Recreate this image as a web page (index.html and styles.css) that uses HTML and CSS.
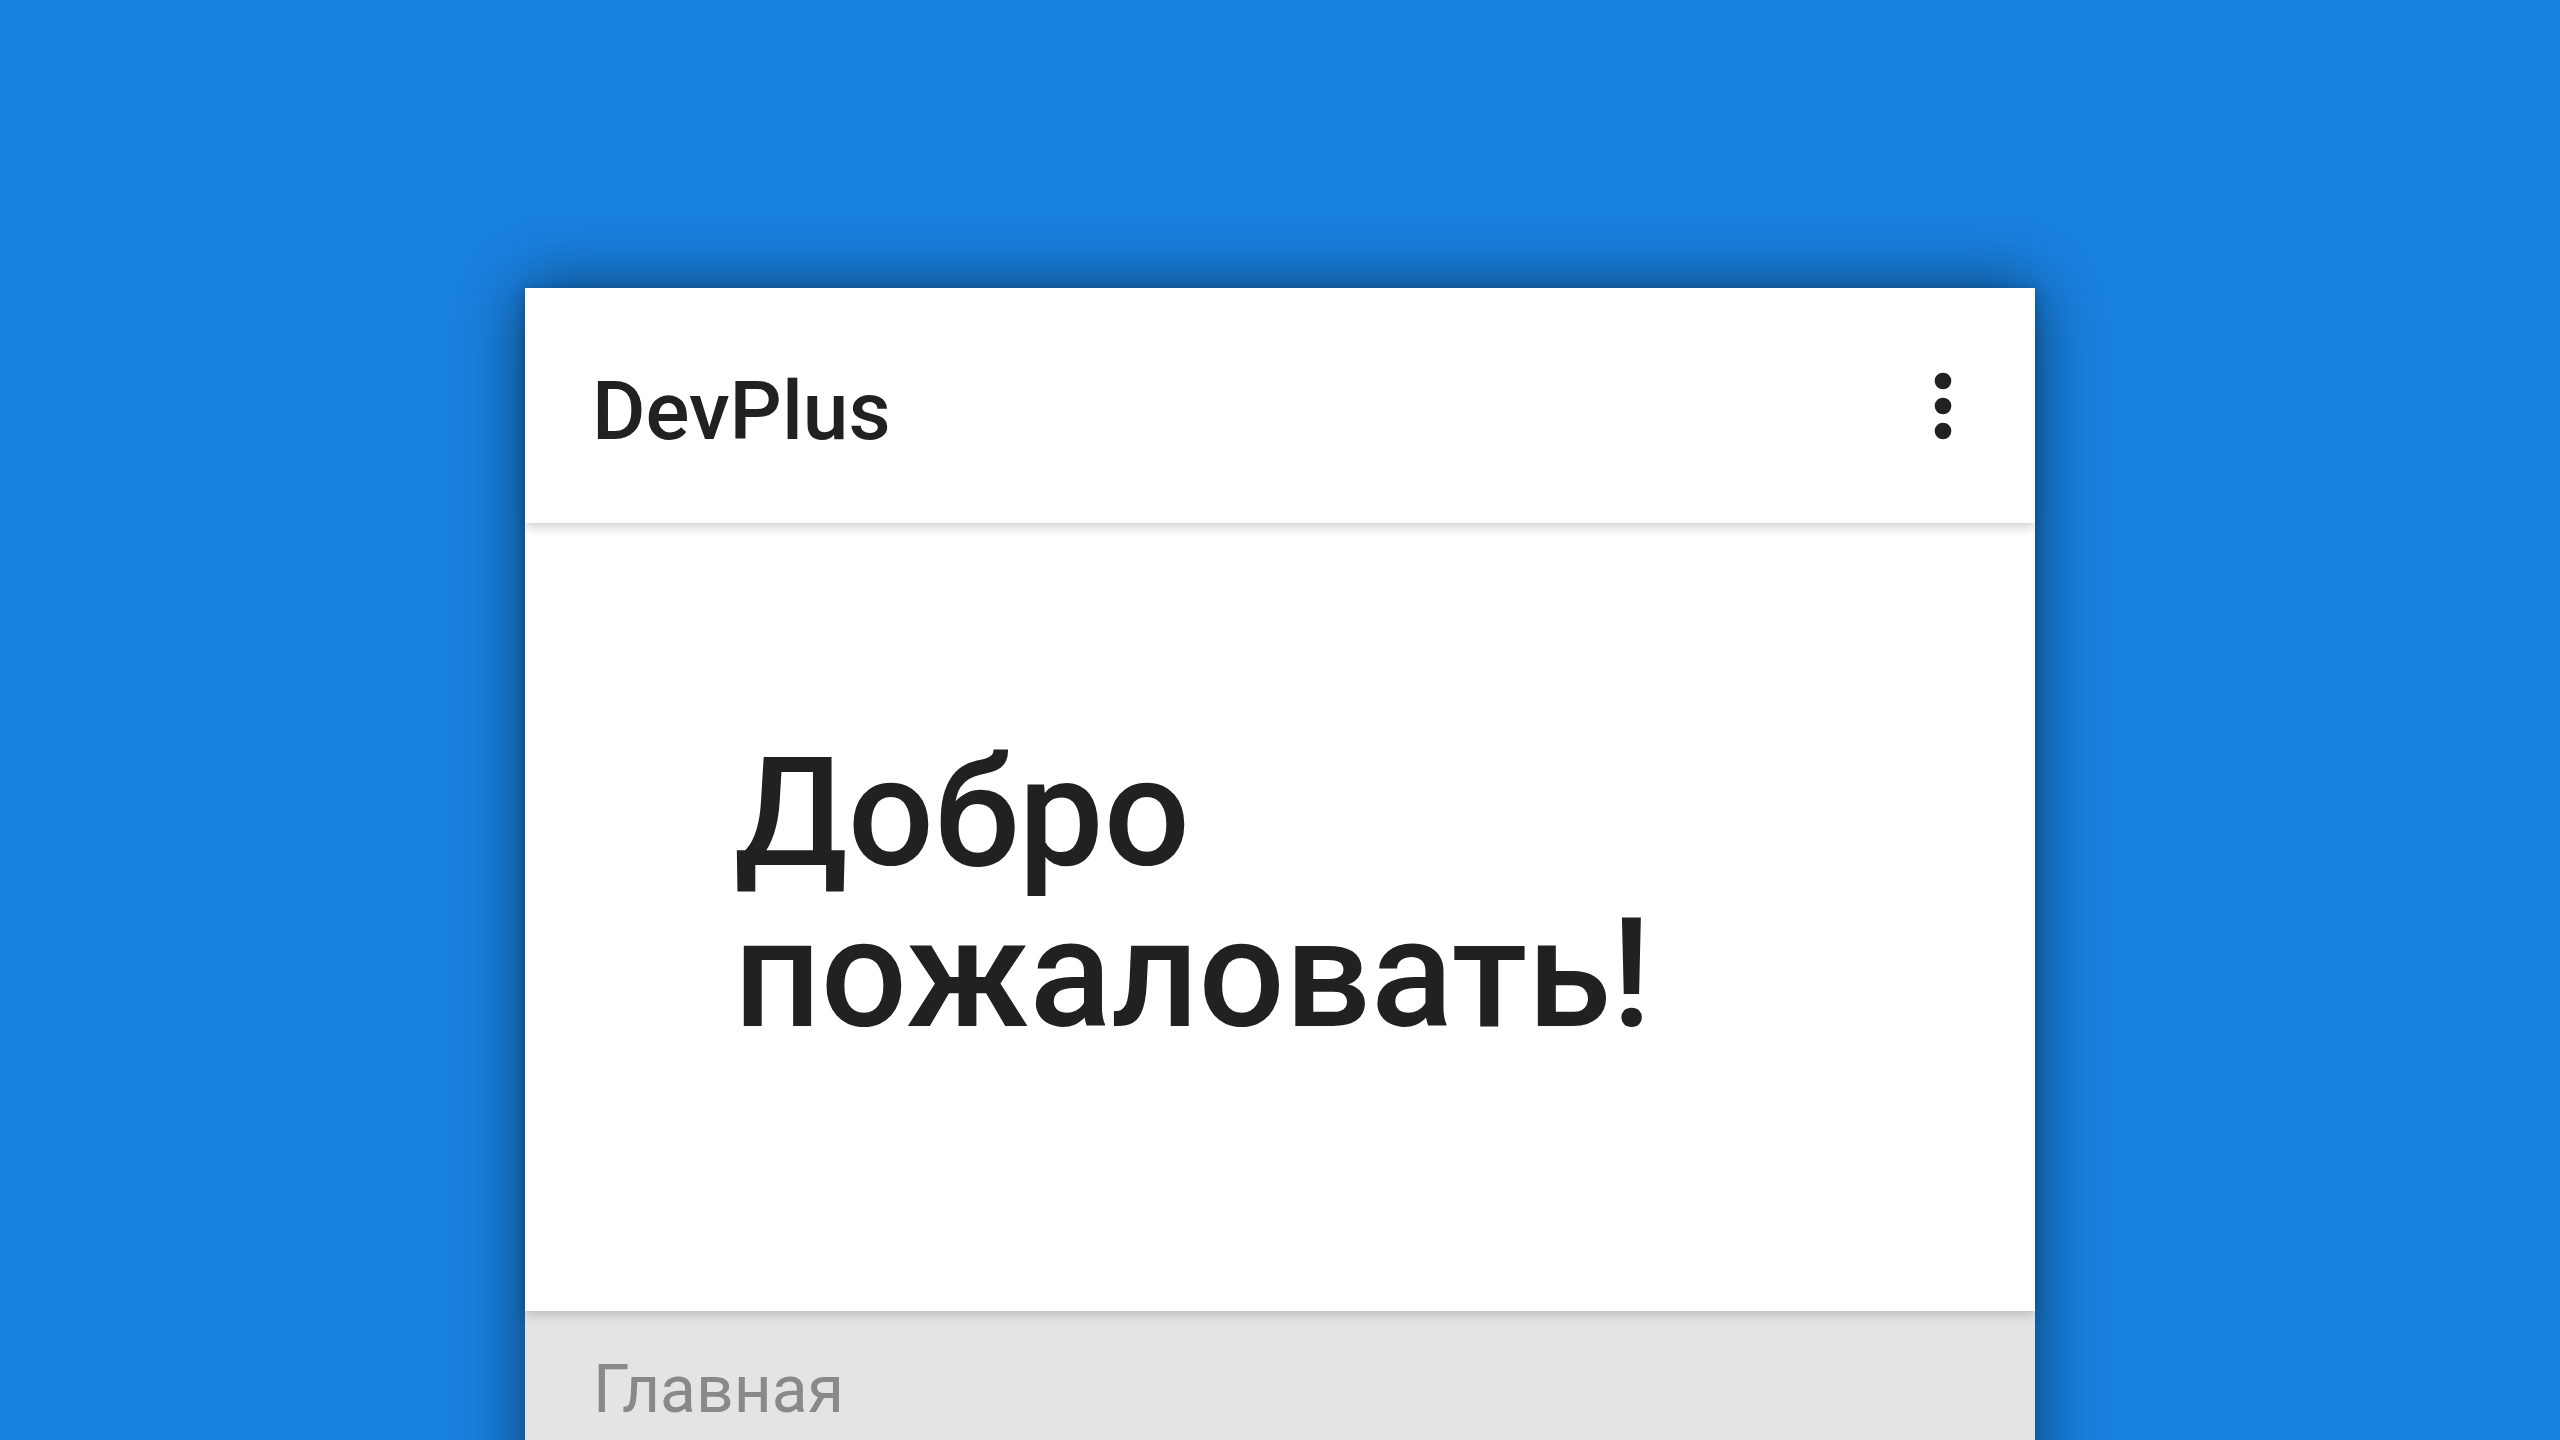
FILE: index.html
```html
<!DOCTYPE html>
<html lang="ru">
<head>
<meta charset="utf-8">
<title>DevPlus</title>
<link rel="stylesheet" href="styles.css">
</head>
<body>
<div class="card">
  <header class="appbar">
    <h1 class="title">DevPlus</h1>
    <button class="menu" aria-label="Меню">
      <svg viewBox="0 0 24 24" width="100" height="100"><circle cx="12" cy="6" r="2"/><circle cx="12" cy="12" r="2"/><circle cx="12" cy="18" r="2"/></svg>
    </button>
  </header>
  <main class="content">
    <h2 class="welcome">Добро<br>пожаловать!</h2>
  </main>
  <nav class="footer">
    <span class="nav-item">Главная</span>
  </nav>
</div>
</body>
</html>
```
FILE: styles.css
```css
html, body {
  margin: 0;
  padding: 0;
  height: 100%;
  overflow: hidden;
}
body {
  background: #1981e0;
  font-family: Roboto, "Noto Sans", sans-serif;
  color: #212121;
}
.card {
  width: 1510px;
  margin: 288px auto 0;
  background: #fff;
  box-shadow: 0 0 64px rgba(0, 0, 0, 0.55);
  display: flex;
  flex-direction: column;
}
.appbar {
  position: relative;
  z-index: 2;
  height: 235px;
  box-sizing: border-box;
  display: flex;
  align-items: center;
  justify-content: space-between;
  padding: 0 42px 0 67px;
  background: #fff;
  box-shadow: 0 3px 12px rgba(0, 0, 0, 0.22);
}
.title {
  margin: 11px 0 0;
  font-size: 82px;
  font-weight: 500;
  line-height: normal;
  color: #212121;
}
.menu {
  border: 0;
  padding: 0;
  background: none;
  width: 100px;
  height: 100px;
  display: flex;
  fill: #212121;
}
.content {
  position: relative;
  z-index: 1;
  height: 788px;
  box-sizing: border-box;
  padding: 210px 0 0 209px;
  background: #fff;
  box-shadow: 0 3px 12px rgba(0, 0, 0, 0.2);
}
.welcome {
  margin: 0;
  font-size: 152px;
  font-weight: 500;
  line-height: 161px;
  color: #212121;
}
.footer {
  height: 300px;
  background: #e4e4e4;
  padding: 40px 68px 0;
  box-sizing: border-box;
}
.nav-item {
  font-size: 66px;
  line-height: normal;
  color: #898989;
}
```
